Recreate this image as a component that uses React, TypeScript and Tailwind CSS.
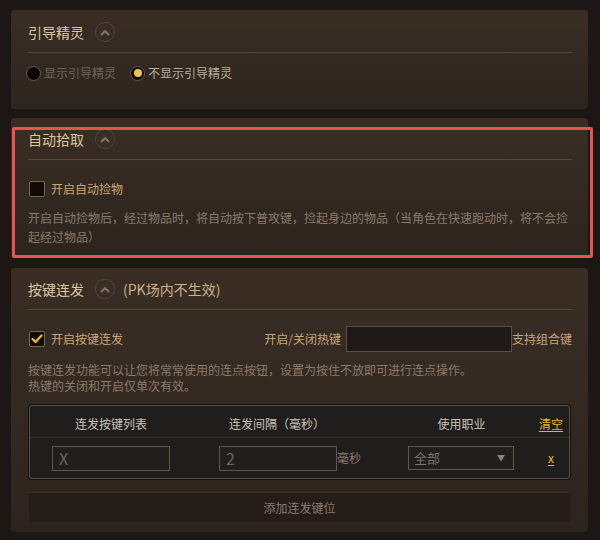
import { FC, ReactNode } from "react";

const font = { fontFamily: '"Noto Sans CJK SC", "Noto Sans", sans-serif' };

const Chevron: FC = () => (
  <span className="ml-[11px] flex h-[20px] w-[20px] items-center justify-center rounded-full border border-[#56473a] bg-[radial-gradient(circle,#3a2f26_40%,#2f261f)]">
    <svg width="10" height="7" viewBox="0 0 10 7">
      <path d="M1.5 5.5 L5 2 L8.5 5.5" fill="none" stroke="#85735f" strokeWidth="2" strokeLinecap="round" strokeLinejoin="round" />
    </svg>
  </span>
);

const Panel: FC<{ title: string; extra?: ReactNode; children: ReactNode; className?: string }> = ({
  title,
  extra,
  children,
  className,
}) => (
  <div
    className={`relative rounded-[4px] bg-gradient-to-b from-[#3a2e24] to-[#2c241e] pl-[17px] pr-[16px] ${className ?? ""}`}
  >
    <div className="flex h-[20px] items-center">
      <span className="text-[14px] leading-[20px] text-[#dcc5a1]">{title}</span>
      <Chevron />
      {extra}
    </div>
    <div className="mt-[10px] h-px bg-[#56463a]" />
    {children}
  </div>
);

const Checkbox: FC<{ checked?: boolean }> = ({ checked }) => (
  <span className="flex h-[16px] w-[16px] items-center justify-center rounded-[2px] border border-[#7b6649] bg-[#0e0b09]">
    {checked && (
      <svg width="12" height="10" viewBox="0 0 12 10">
        <path d="M1.5 5 L4.5 8 L10.5 1.5" fill="none" stroke="#f2b731" strokeWidth="2.2" strokeLinecap="round" strokeLinejoin="round" />
      </svg>
    )}
  </span>
);

const Radio: FC<{ on?: boolean }> = ({ on }) => (
  <span className="flex h-[15px] w-[15px] items-center justify-center rounded-full border border-[#6c5a44] bg-[#0b0908]">
    {on && <span className="h-[8px] w-[8px] rounded-full bg-[#f3c249]" />}
  </span>
);

const App: FC = () => {
  return (
    <div style={font} className="h-[540px] w-[600px] overflow-hidden bg-[#1c1714] pl-[11px] pt-[10px]">
      <div className="flex w-[577px] flex-col gap-[9px]">
        {/* 引导精灵 */}
        <Panel title="引导精灵" className="pt-[12px] pb-[28px]">
          <div className="-ml-[2px] mt-[12px] flex h-[16px] items-center text-[12px]">
            <Radio />
            <span className="ml-[3px] text-[#6f655a]">显示引导精灵</span>
            <span className="ml-[14px]">
              <Radio on />
            </span>
            <span className="ml-[3px] text-[#bcae9a]">不显示引导精灵</span>
          </div>
        </Panel>

        {/* 自动拾取 */}
        <Panel title="自动拾取" className="pt-[11px] pb-[12px]">
          <div className="mt-[21px] flex h-[16px] items-center">
            <span className="ml-px">
              <Checkbox />
            </span>
            <span className="ml-[6px] text-[12px] text-[#c9a777]">开启自动捡物</span>
          </div>
          <p className="mt-[11px] text-[12px] leading-[19px] text-[#8b7b69]">
            开启自动捡物后，经过物品时，将自动按下普攻键，捡起身边的物品（当角色在快速跑动时，将不会捡起经过物品）
          </p>
          <div className="pointer-events-none absolute -right-[5px] bottom-0 left-px top-[9px] rounded-[2px] border-[3px] border-[#e9524e]" />
        </Panel>

        {/* 按键连发 */}
        <Panel
          title="按键连发"
          className="mt-px pt-[11px] pb-[10px]"
          extra={<span className="ml-[8px] text-[14px] text-[#ccb28c]">(PK场内不生效)</span>}
        >
          <div className="mt-[16px] flex h-[26px] items-center text-[12px]">
            <span className="ml-px">
              <Checkbox checked />
            </span>
            <span className="ml-[6px] text-[#c9a777]">开启按键连发</span>
            <span className="ml-auto text-[#c9a777]">开启/关闭热键</span>
            <span className="ml-[5px] h-[26px] w-[166px] border border-[#5b5045] bg-[#1f1a17]" />
            <span className="text-[#c9a777]">支持组合键</span>
          </div>
          <p className="mt-[10px] text-[12px] leading-[16px] text-[#8b7b69]">
            按键连发功能可以让您将常常使用的连点按钮，设置为按住不放即可进行连点操作。
            <br />
            热键的关闭和开启仅单次有效。
          </p>

          <div className="ml-px mr-[2px] mt-[11px] rounded-[3px] border border-[#57514b] bg-[#1f1e1d] shadow-[0_0_0_1px_#151210]">
            <div className="grid h-[31px] grid-cols-[162px_170px_171px_1fr] items-center pt-[5px] text-[12px] text-[#cbc3b9]">
              <span className="text-center">连发按键列表</span>
              <span className="text-center">连发间隔（毫秒）</span>
              <span className="pl-[28px] text-center">使用职业</span>
              <span className="text-center text-[#eab52e] underline underline-offset-2">清空</span>
            </div>
            <div className="h-px bg-[#35312e]" />
            <div className="grid h-[40px] grid-cols-[162px_170px_171px_1fr] items-center">
              <div className="pl-[22px]">
                <div className="flex h-[25px] w-[118px] items-center border border-[#5f564c] bg-[#221e1b] pl-[6px] text-[16px] text-[#6b655f]">
                  X
                </div>
              </div>
              <div className="flex items-center pl-[27px]">
                <div className="flex h-[25px] w-[118px] items-center border border-[#5f564c] bg-[#221e1b] pl-[6px] text-[16px] text-[#6b655f]">
                  2
                </div>
                <span className="text-[12px] text-[#8b7b69]">毫秒</span>
              </div>
              <div className="pl-[46px]">
                <div className="flex h-[24px] w-[106px] items-center justify-between border border-[#5f564c] bg-[#221e1b] pl-[5px] pr-[8px] text-[13px] text-[#7a746c]">
                  全部
                  <span className="text-[8px] text-[#8a8580]">▼</span>
                </div>
              </div>
              <span className="text-center text-[12px] text-[#eab52e] underline underline-offset-2">x</span>
            </div>
          </div>

          <div className="ml-px mr-[2px] mt-[13px] flex h-[30px] items-center justify-center rounded-[2px] border-t border-[#3b312a] bg-[#241d19] text-[12px] text-[#8b7b6b]">
            添加连发键位
          </div>
        </Panel>
      </div>
    </div>
  );
};

export default App;
